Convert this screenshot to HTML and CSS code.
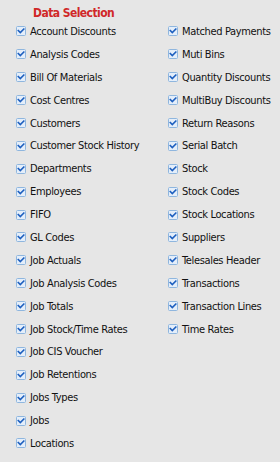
FILE: index.html
```html
<!DOCTYPE html>
<html>
<head>
<meta charset="utf-8">
<link rel="stylesheet" href="styles.css">
</head>
<body>
<div class="panel">
  <div class="title">Data Selection</div>
  <div class="cols">
    <ul class="col">
      <li><span class="cb"><svg viewBox="0 0 10 10"><rect x="0.5" y="0.5" width="9" height="9" rx="1" class="box"/><path d="M2.3 4.6 L4.3 6.6 L7.8 3.1" class="tick"/></svg></span>Account Discounts</li>
      <li><span class="cb"><svg viewBox="0 0 10 10"><rect x="0.5" y="0.5" width="9" height="9" rx="1" class="box"/><path d="M2.3 4.6 L4.3 6.6 L7.8 3.1" class="tick"/></svg></span>Analysis Codes</li>
      <li><span class="cb"><svg viewBox="0 0 10 10"><rect x="0.5" y="0.5" width="9" height="9" rx="1" class="box"/><path d="M2.3 4.6 L4.3 6.6 L7.8 3.1" class="tick"/></svg></span>Bill Of Materials</li>
      <li><span class="cb"><svg viewBox="0 0 10 10"><rect x="0.5" y="0.5" width="9" height="9" rx="1" class="box"/><path d="M2.3 4.6 L4.3 6.6 L7.8 3.1" class="tick"/></svg></span>Cost Centres</li>
      <li><span class="cb"><svg viewBox="0 0 10 10"><rect x="0.5" y="0.5" width="9" height="9" rx="1" class="box"/><path d="M2.3 4.6 L4.3 6.6 L7.8 3.1" class="tick"/></svg></span>Customers</li>
      <li><span class="cb"><svg viewBox="0 0 10 10"><rect x="0.5" y="0.5" width="9" height="9" rx="1" class="box"/><path d="M2.3 4.6 L4.3 6.6 L7.8 3.1" class="tick"/></svg></span>Customer Stock History</li>
      <li><span class="cb"><svg viewBox="0 0 10 10"><rect x="0.5" y="0.5" width="9" height="9" rx="1" class="box"/><path d="M2.3 4.6 L4.3 6.6 L7.8 3.1" class="tick"/></svg></span>Departments</li>
      <li><span class="cb"><svg viewBox="0 0 10 10"><rect x="0.5" y="0.5" width="9" height="9" rx="1" class="box"/><path d="M2.3 4.6 L4.3 6.6 L7.8 3.1" class="tick"/></svg></span>Employees</li>
      <li><span class="cb"><svg viewBox="0 0 10 10"><rect x="0.5" y="0.5" width="9" height="9" rx="1" class="box"/><path d="M2.3 4.6 L4.3 6.6 L7.8 3.1" class="tick"/></svg></span>FIFO</li>
      <li><span class="cb"><svg viewBox="0 0 10 10"><rect x="0.5" y="0.5" width="9" height="9" rx="1" class="box"/><path d="M2.3 4.6 L4.3 6.6 L7.8 3.1" class="tick"/></svg></span>GL Codes</li>
      <li><span class="cb"><svg viewBox="0 0 10 10"><rect x="0.5" y="0.5" width="9" height="9" rx="1" class="box"/><path d="M2.3 4.6 L4.3 6.6 L7.8 3.1" class="tick"/></svg></span>Job Actuals</li>
      <li><span class="cb"><svg viewBox="0 0 10 10"><rect x="0.5" y="0.5" width="9" height="9" rx="1" class="box"/><path d="M2.3 4.6 L4.3 6.6 L7.8 3.1" class="tick"/></svg></span>Job Analysis Codes</li>
      <li><span class="cb"><svg viewBox="0 0 10 10"><rect x="0.5" y="0.5" width="9" height="9" rx="1" class="box"/><path d="M2.3 4.6 L4.3 6.6 L7.8 3.1" class="tick"/></svg></span>Job Totals</li>
      <li><span class="cb"><svg viewBox="0 0 10 10"><rect x="0.5" y="0.5" width="9" height="9" rx="1" class="box"/><path d="M2.3 4.6 L4.3 6.6 L7.8 3.1" class="tick"/></svg></span>Job Stock/Time Rates</li>
      <li><span class="cb"><svg viewBox="0 0 10 10"><rect x="0.5" y="0.5" width="9" height="9" rx="1" class="box"/><path d="M2.3 4.6 L4.3 6.6 L7.8 3.1" class="tick"/></svg></span>Job CIS Voucher</li>
      <li><span class="cb"><svg viewBox="0 0 10 10"><rect x="0.5" y="0.5" width="9" height="9" rx="1" class="box"/><path d="M2.3 4.6 L4.3 6.6 L7.8 3.1" class="tick"/></svg></span>Job Retentions</li>
      <li><span class="cb"><svg viewBox="0 0 10 10"><rect x="0.5" y="0.5" width="9" height="9" rx="1" class="box"/><path d="M2.3 4.6 L4.3 6.6 L7.8 3.1" class="tick"/></svg></span>Jobs Types</li>
      <li><span class="cb"><svg viewBox="0 0 10 10"><rect x="0.5" y="0.5" width="9" height="9" rx="1" class="box"/><path d="M2.3 4.6 L4.3 6.6 L7.8 3.1" class="tick"/></svg></span>Jobs</li>
      <li><span class="cb"><svg viewBox="0 0 10 10"><rect x="0.5" y="0.5" width="9" height="9" rx="1" class="box"/><path d="M2.3 4.6 L4.3 6.6 L7.8 3.1" class="tick"/></svg></span>Locations</li>
    </ul>
    <ul class="col">
      <li><span class="cb"><svg viewBox="0 0 10 10"><rect x="0.5" y="0.5" width="9" height="9" rx="1" class="box"/><path d="M2.3 4.6 L4.3 6.6 L7.8 3.1" class="tick"/></svg></span>Matched Payments</li>
      <li><span class="cb"><svg viewBox="0 0 10 10"><rect x="0.5" y="0.5" width="9" height="9" rx="1" class="box"/><path d="M2.3 4.6 L4.3 6.6 L7.8 3.1" class="tick"/></svg></span>Muti Bins</li>
      <li><span class="cb"><svg viewBox="0 0 10 10"><rect x="0.5" y="0.5" width="9" height="9" rx="1" class="box"/><path d="M2.3 4.6 L4.3 6.6 L7.8 3.1" class="tick"/></svg></span>Quantity Discounts</li>
      <li><span class="cb"><svg viewBox="0 0 10 10"><rect x="0.5" y="0.5" width="9" height="9" rx="1" class="box"/><path d="M2.3 4.6 L4.3 6.6 L7.8 3.1" class="tick"/></svg></span>MultiBuy Discounts</li>
      <li><span class="cb"><svg viewBox="0 0 10 10"><rect x="0.5" y="0.5" width="9" height="9" rx="1" class="box"/><path d="M2.3 4.6 L4.3 6.6 L7.8 3.1" class="tick"/></svg></span>Return Reasons</li>
      <li><span class="cb"><svg viewBox="0 0 10 10"><rect x="0.5" y="0.5" width="9" height="9" rx="1" class="box"/><path d="M2.3 4.6 L4.3 6.6 L7.8 3.1" class="tick"/></svg></span>Serial Batch</li>
      <li><span class="cb"><svg viewBox="0 0 10 10"><rect x="0.5" y="0.5" width="9" height="9" rx="1" class="box"/><path d="M2.3 4.6 L4.3 6.6 L7.8 3.1" class="tick"/></svg></span>Stock</li>
      <li><span class="cb"><svg viewBox="0 0 10 10"><rect x="0.5" y="0.5" width="9" height="9" rx="1" class="box"/><path d="M2.3 4.6 L4.3 6.6 L7.8 3.1" class="tick"/></svg></span>Stock Codes</li>
      <li><span class="cb"><svg viewBox="0 0 10 10"><rect x="0.5" y="0.5" width="9" height="9" rx="1" class="box"/><path d="M2.3 4.6 L4.3 6.6 L7.8 3.1" class="tick"/></svg></span>Stock Locations</li>
      <li><span class="cb"><svg viewBox="0 0 10 10"><rect x="0.5" y="0.5" width="9" height="9" rx="1" class="box"/><path d="M2.3 4.6 L4.3 6.6 L7.8 3.1" class="tick"/></svg></span>Suppliers</li>
      <li><span class="cb"><svg viewBox="0 0 10 10"><rect x="0.5" y="0.5" width="9" height="9" rx="1" class="box"/><path d="M2.3 4.6 L4.3 6.6 L7.8 3.1" class="tick"/></svg></span>Telesales Header</li>
      <li><span class="cb"><svg viewBox="0 0 10 10"><rect x="0.5" y="0.5" width="9" height="9" rx="1" class="box"/><path d="M2.3 4.6 L4.3 6.6 L7.8 3.1" class="tick"/></svg></span>Transactions</li>
      <li><span class="cb"><svg viewBox="0 0 10 10"><rect x="0.5" y="0.5" width="9" height="9" rx="1" class="box"/><path d="M2.3 4.6 L4.3 6.6 L7.8 3.1" class="tick"/></svg></span>Transaction Lines</li>
      <li><span class="cb"><svg viewBox="0 0 10 10"><rect x="0.5" y="0.5" width="9" height="9" rx="1" class="box"/><path d="M2.3 4.6 L4.3 6.6 L7.8 3.1" class="tick"/></svg></span>Time Rates</li>
    </ul>
  </div>
</div>
</body>
</html>
```
FILE: styles.css
```css
html, body {
  margin: 0;
  padding: 0;
  background: #e6e6e6;
}
body {
  width: 280px;
  height: 462px;
  overflow: hidden;
  font-family: "DejaVu Sans Condensed", "DejaVu Sans", sans-serif;
  font-size: 11px;
  letter-spacing: -0.35px;
  color: #111111;
}
.panel {
  padding-left: 16px;
}
.title {
  height: 20px;
  line-height: 27px;
  padding-left: 17px;
  font-weight: bold;
  font-size: 12px;
  letter-spacing: -0.55px;
  color: #d02828;
}
.cols {
  display: grid;
  grid-template-columns: 152px 1fr;
}
.col {
  list-style: none;
  margin: 0;
  padding: 0;
}
.col li {
  height: 22.9px;
  display: flex;
  align-items: center;
  white-space: nowrap;
}
.cb {
  width: 10px;
  height: 10px;
  margin-right: 4px;
  display: flex;
}
.cb svg {
  width: 10px;
  height: 10px;
  display: block;
}
.box {
  fill: #e4eefa;
  stroke: #8fb6de;
  stroke-width: 1;
}
.tick {
  fill: none;
  stroke: #1d5fbf;
  stroke-width: 1.6;
  stroke-linecap: square;
}
```
